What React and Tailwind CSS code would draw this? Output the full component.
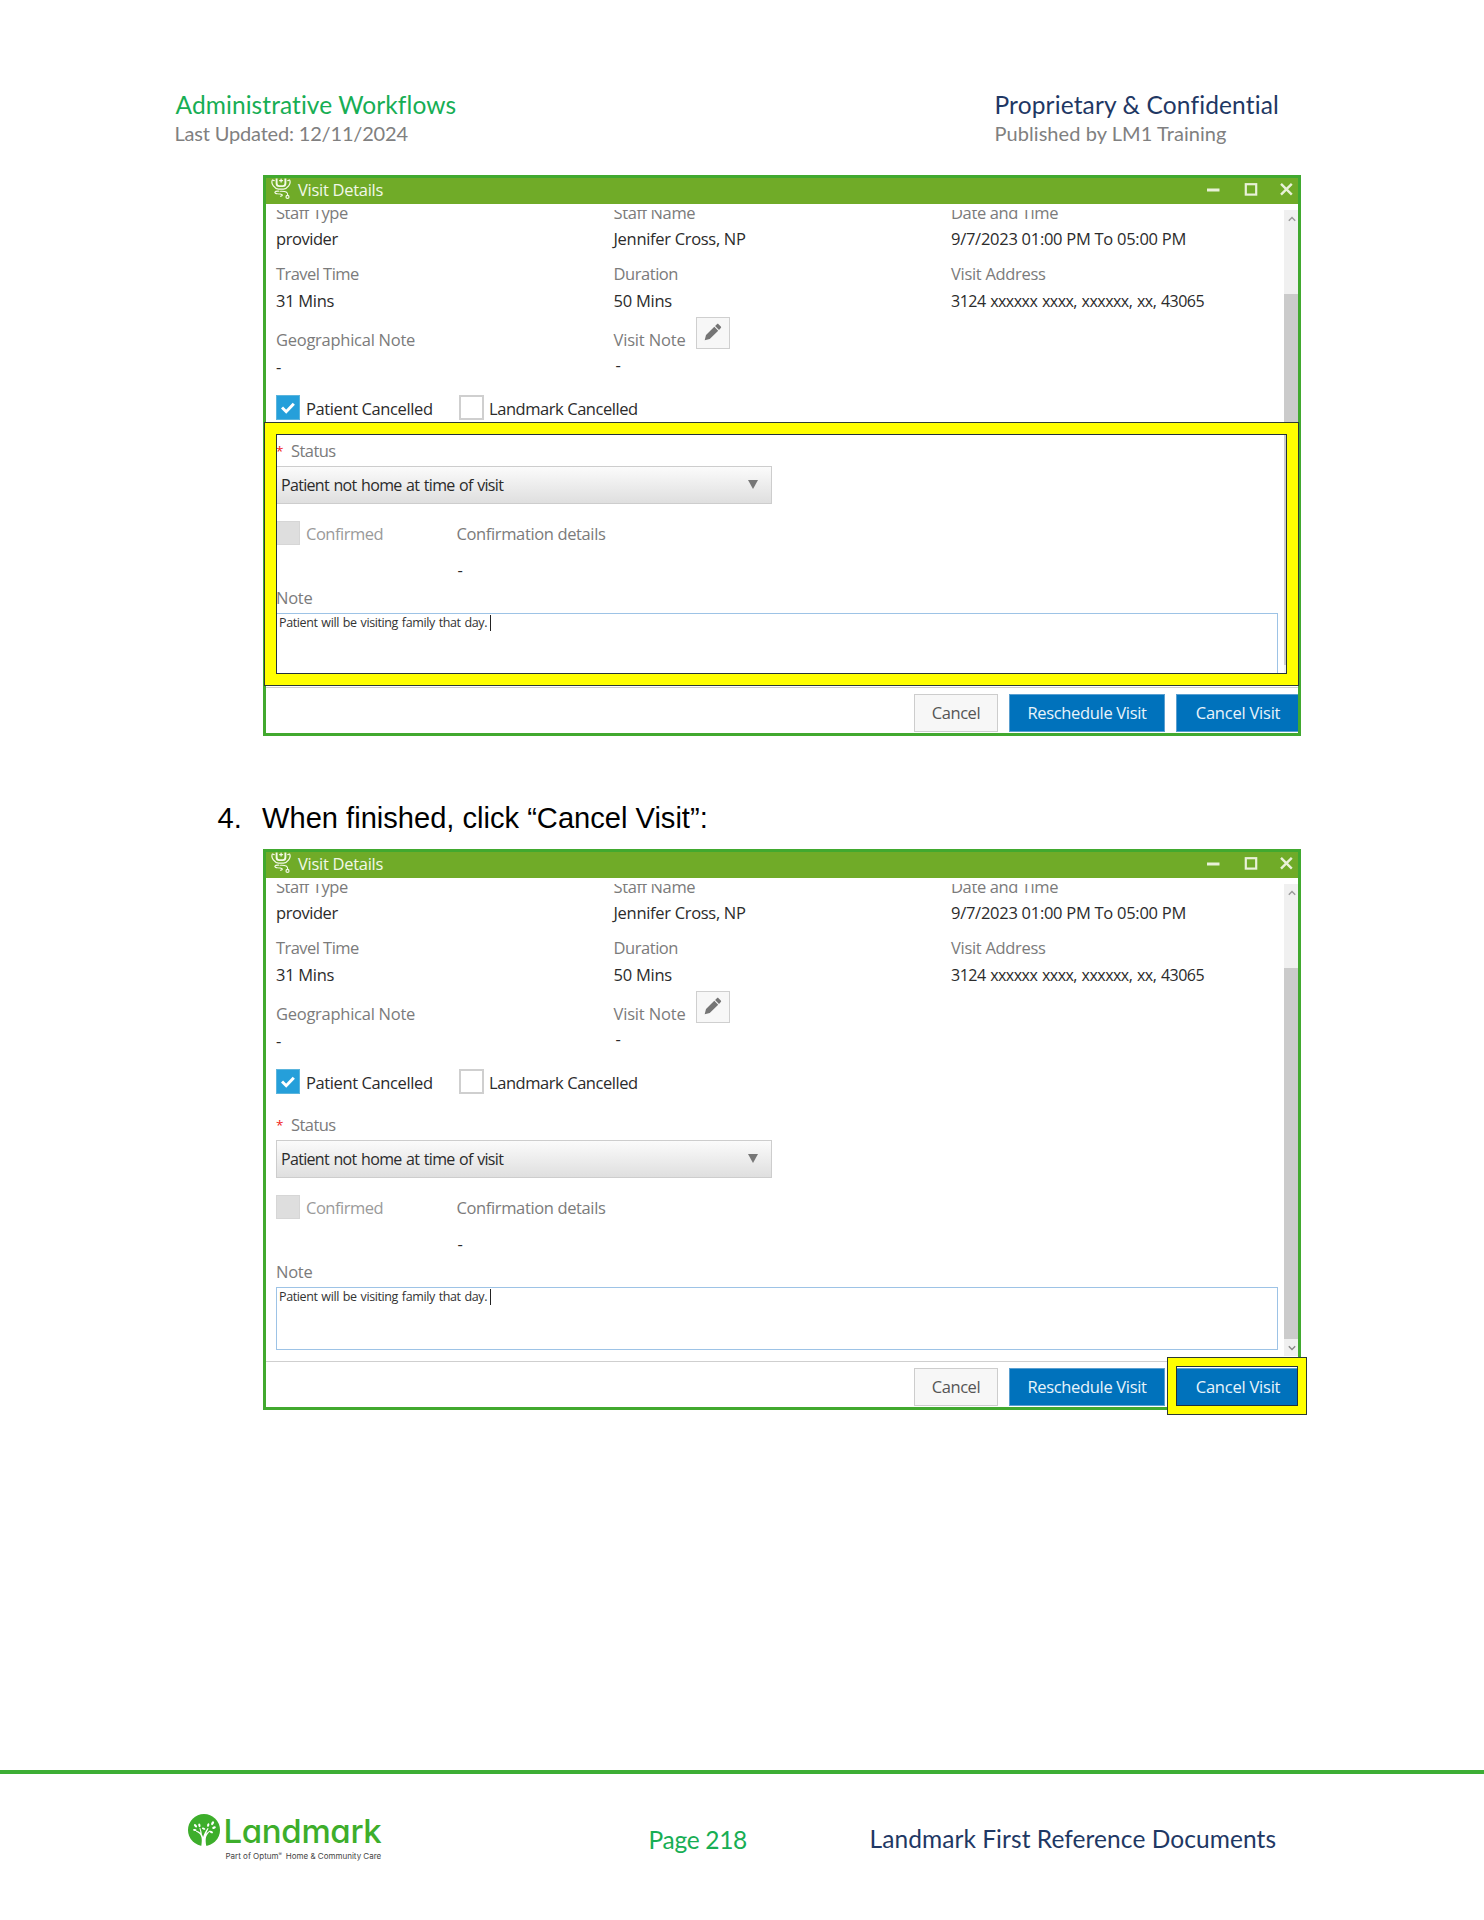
import React from 'react';

function Txt({ children, c = '' }) {
  return <span className={`block h-5 whitespace-nowrap leading-5 ${c}`}>{children}</span>;
}

function StethoscopeIcon() {
  return (
    <svg className="h-[21px] w-5" viewBox="0 0 20 21" fill="none" stroke="#f4fae9" strokeWidth="1.2" strokeLinecap="round">
      <path d="M1.200 2.400C-.2 6 3.500 10.600 7.500 11.200h5C16.500 10.600 20.200 6 18.800 2.400" />
      <path d="M1.400 2l1.800.6M18.600 2l-1.800.6" />
      <path d="M5.600.6v4.600c0 1.700.9 2.900 2.600 2.900h3.600c1.700 0 2.600-1.200 2.600-2.900V.6" strokeWidth="1.900" strokeLinecap="butt" />
      <path d="M8.600 2.600h3M10.100 1.100v3" strokeWidth="1.200" />
      <path d="M8 13.200c-5-.3-5.500 2.300-1.500 2.600 4.500.2 6.500 1.600 3 2.500M9.500 13.300c5.500-.2 7.300 1 7.200 4" strokeWidth="1.100" />
      <circle cx="16.500" cy="18.900" r="1.500" />
    </svg>
  );
}

function TitleBar() {
  return (
    <div className="flex h-[26px] bg-[#70ab28] pl-[5px] pr-[5px] text-[#f2f8e8]">
      <StethoscopeIcon />
      <Txt c="ml-[7px] mt-0.5 flex-1 tracking-[-0.28px]">Visit Details</Txt>
      <svg className="mt-[4px] h-[14px] w-[87px]" viewBox="0 0 87 14" fill="none" stroke="#e9f1d8">
        <path d="M1 8h12.500" strokeWidth="3" />
        <rect x="39.800" y="2.200" width="10.400" height="10.400" strokeWidth="2.200" />
        <path d="M75 1.900l10.800 10.800M85.800 1.900L75 12.700" strokeWidth="2.400" />
      </svg>
    </div>
  );
}

function PencilButton() {
  return (
    <div className="flex h-8 w-[34px] items-center justify-center border border-[#cfcfcf] bg-[#f7f7f7]">
      <svg className="-mt-0.5 h-[18px] w-[18px]" viewBox="0 0 18 18" fill="#757575">
        <path d="M.7 17.200l1.300-5.100L10.300 3.800l3.900 3.900-8.500 8.300zM11.100 3l1.800-1.800c.5-.5 1.100-.5 1.600 0l2.300 2.300c.5.5.5 1.100 0 1.600L15 6.900z" />
      </svg>
    </div>
  );
}

function Field({ label, value, gap, lc, vc }) {
  return (
    <div className="flex flex-col">
      <Txt c={`text-[#7b7b7b] ${lc}`}>{label}</Txt>
      <Txt c={`text-[#2b2b2b] ${gap} ${vc}`}>{value}</Txt>
    </div>
  );
}

function Details() {
  return (
    <div className="-mt-[7px] grid grid-cols-[337.5px_337.5px_1fr] grid-rows-[61px_53px_78px]">
      <Field label="Staff Type" value="provider" gap="mt-1.5" lc="tracking-[-0.45px]" vc="tracking-[-0.45px]" />
      <Field label="Staff Name" value="Jennifer Cross, NP" gap="mt-1.5" lc="tracking-[-0.4px]" vc="tracking-[-0.31px]" />
      <Field label="Date and Time" value="9/7/2023 01:00 PM To 05:00 PM" gap="mt-1.5" lc="tracking-[-0.38px]" vc="tracking-[-0.27px]" />
      <Field label="Travel Time" value="31 Mins" gap="mt-[7px]" lc="tracking-[-0.55px]" vc="tracking-[-0.3px]" />
      <Field label="Duration" value="50 Mins" gap="mt-[7px]" lc="tracking-[-0.45px]" vc="tracking-[-0.25px]" />
      <Field label="Visit Address" value="3124 xxxxxx xxxx, xxxxxx, xx, 43065" gap="mt-[7px]" lc="tracking-[-0.3px]" vc="text-[16px] tracking-[-0.52px] [word-spacing:1px]" />
      <div className="pt-[13px]">
        <Txt c="text-[#7b7b7b] tracking-[-0.26px]">Geographical Note</Txt>
        <Txt c="mt-[7px] text-[#2b2b2b]">-</Txt>
      </div>
      <div>
        <div className="flex h-[38px]">
          <Txt c="mt-[13px] w-[82.5px] text-[#7b7b7b] tracking-[-0.17px]">Visit Note</Txt>
          <PencilButton />
        </div>
        <Txt c="ml-0.5 text-[#2b2b2b]">-</Txt>
      </div>
    </div>
  );
}

function CheckRow() {
  return (
    <div className="flex h-[25px] text-[#2b2b2b]">
      <div className="flex w-6 items-center justify-center border border-[#5bb5dd] bg-[#259fda]">
        <svg className="h-3 w-[14px]" viewBox="0 0 14 12" fill="none" stroke="#fff" strokeWidth="3">
          <path d="M1 5.500l4.200 4.200L12.800 1.700" />
        </svg>
      </div>
      <Txt c="ml-[6px] mt-1 w-[153px] tracking-[-0.39px]">Patient Cancelled</Txt>
      <div className="w-[25px] border-2 border-[#cfcfcf] bg-white" />
      <Txt c="ml-[5px] mt-1 tracking-[-0.44px]">Landmark Cancelled</Txt>
    </div>
  );
}

function StatusForm() {
  return (
    <>
      <div className="mt-[21px] flex h-[25px]">
        <Txt c="w-[15px] text-[#f02020] text-[13.5px]">*</Txt>
        <Txt c="text-[#7b7b7b] tracking-[-0.55px]">Status</Txt>
      </div>
      <div className="flex h-[38px] w-[496px] items-start justify-between border border-[#cdcdcd] bg-linear-to-b from-[#fbfbfb] to-[#dfdfdf] pl-1 pr-[13px] pt-2">
        <Txt c="text-[16px] text-[#2b2b2b] tracking-[-0.68px] [word-spacing:1px]">Patient not home at time of visit</Txt>
        <svg className="mt-[5px] h-[9px] w-[10px]" viewBox="0 0 10 9" fill="#777">
          <path d="M0 0h10L5 9z" />
        </svg>
      </div>
      <div className="mt-[17px] flex h-[67px]">
        <div className="h-6 w-6 border border-[#d6d6d6] bg-[#dedede]" />
        <Txt c="ml-[6px] mt-[3px] w-[150.500px] text-[#9a9a9a] tracking-[-0.5px]">Confirmed</Txt>
        <div>
          <Txt c="mt-[3px] text-[#7b7b7b] tracking-[-0.37px]">Confirmation details</Txt>
          <Txt c="mt-4 ml-px text-[#2b2b2b]">-</Txt>
        </div>
      </div>
      <Txt c="text-[#7b7b7b] tracking-[-0.25px]">Note</Txt>
      <div className="mt-[5px] flex h-[63px] w-[1002px] border border-[#9dc3e6] pl-0.5 text-[12.5px] text-[#333]">
        <Txt c="-mt-px tracking-[-0.39px] [word-spacing:1px]">Patient will be visiting family that day.</Txt>
        <div className="ml-[3px] mt-px h-4 w-px bg-[#222]" />
      </div>
    </>
  );
}

function ScrollBar() {
  return (
    <div className="flex h-[472px] w-[14px] flex-col items-center bg-[#f0f0f0]">
      <svg className="ml-0.5 mt-1.5 h-[6px] w-2" viewBox="0 0 8 6" fill="none" stroke="#999" strokeWidth="1.400">
        <path d="M.8 4.800L4 1.500l3.200 3.300" />
      </svg>
      <div className="mt-[72px] h-[371px] w-full bg-[#cbcbcb]" />
      <svg className="ml-0.5 mt-1.5 h-[6px] w-2" viewBox="0 0 8 6" fill="none" stroke="#888" strokeWidth="1.400">
        <path d="M.8 1.200L4 4.500l3.200-3.300" />
      </svg>
    </div>
  );
}

function Highlight({ box, band }) {
  return (
    <div className={`absolute border border-[#2c3a34] ${box}`}>
      <div className={`h-full w-full border-[#ffff00] ${band}`}>
        <div className="h-full w-full border border-[#22323c]" />
      </div>
    </div>
  );
}

function VisitWindow({ children }) {
  return (
    <div className="relative ml-[263px] h-[561px] w-[1038px] border-[3px] border-[#41a92f] bg-white text-[16.5px]">
      <TitleBar />
      <div className="mt-1.5 flex h-[477px] overflow-hidden">
        <div className="w-[1018px] pl-[10px]">
          <Details />
          <CheckRow />
          <StatusForm />
        </div>
        <ScrollBar />
      </div>
      <div className="flex h-[46px] border-t border-[#cfcfcf] pt-1.5">
        <div className="ml-[648px] flex h-[38px] w-[84px] justify-center border border-[#cdcdcd] bg-[#f7f7f7] pt-2 text-[#555]">
          <Txt c="tracking-[-0.45px]">Cancel</Txt>
        </div>
        <div className="ml-[11px] flex h-[38px] w-[156px] justify-center border border-[#5a9fd0] bg-[#0072bc] pt-2 text-[#e8f4fb]">
          <Txt c="tracking-[-0.33px]">Reschedule Visit</Txt>
        </div>
        <div className="ml-[11px] flex h-[38px] w-[122px] justify-center border border-r-0 border-[#5a9fd0] bg-[#0072bc] pl-px pt-2 text-[#e8f4fb]">
          <Txt c="tracking-[-0.22px]">Cancel Visit</Txt>
        </div>
      </div>
      {children}
    </div>
  );
}

function TreeMark() {
  return (
    <svg className="h-8 w-8" viewBox="0 0 32 32">
      <circle cx="16" cy="16" r="16" fill="#3dae2b" />
      <path d="M13.300 32c.9-6 .6-8.800-1-11.300-1-1.500-2.400-2.400-4.300-3l.4-1c1.600.4 2.900 1 4 2-.1-1.600-.4-3-1-4.500l.9-.3c1 2.300 1.500 4.500 1.600 6.700.5.800.9 1.500 1.200 2.300.9-3 2.300-6 4.600-9l.9.600c-1.100 1.800-1.900 3.500-2.400 5.200 1-1.200 2.200-2.200 3.700-3.200l.5.800c-4.500 3.500-5.500 7-4.100 14.700z" fill="#fff" />
      <g fill="#fff">
        <ellipse cx="6.800" cy="16" rx="1.800" ry="1" transform="rotate(10 6.800 16)" />
        <ellipse cx="7.500" cy="11.700" rx="2" ry="1.100" transform="rotate(50 7.500 11.700)" />
        <ellipse cx="11.400" cy="11.300" rx="1.900" ry="1.100" transform="rotate(80 11.400 11.300)" />
        <ellipse cx="15.600" cy="14.600" rx="1.800" ry="1" transform="rotate(20 15.600 14.600)" />
        <ellipse cx="20.200" cy="11" rx="1.900" ry="1.100" transform="rotate(-75 20.200 11)" />
        <ellipse cx="24.600" cy="9.200" rx="2.100" ry="1.200" transform="rotate(-60 24.600 9.200)" />
        <ellipse cx="26" cy="13.600" rx="1.900" ry="1.100" transform="rotate(-20 26 13.600)" />
        <ellipse cx="23.200" cy="18" rx="1.900" ry="1" transform="rotate(20 23.200 18)" />
      </g>
    </svg>
  );
}

export default function App() {
  return (
    <div className="h-[1920px] w-[1484px] overflow-hidden bg-white font-['Open_Sans',sans-serif]">
      <header className="grid grid-cols-[820px_1fr] whitespace-nowrap pl-[174.5px] pt-[90px] font-['Lato',sans-serif] text-[24.5px] leading-[30px]">
        <div className="pl-px tracking-[0.08px] text-[#17ae54]">Administrative Workflows</div>
        <div className="tracking-[0.14px] text-[#1f3864]">Proprietary &amp; Confidential</div>
        <div className="mt-px text-[20px] leading-6 tracking-[-0.18px] text-[#808080]">Last Updated: 12/11/2024</div>
        <div className="mt-px text-[20px] leading-6 tracking-[0.07px] text-[#808080]">Published by LM1 Training</div>
      </header>

      <main className="mt-[30px]">
        <VisitWindow>
          <Highlight box="-left-[2px] top-[244px] h-[264px] w-[1035px]" band="border-[11px]" />
        </VisitWindow>
        <div className="mt-16 flex h-9 whitespace-nowrap pl-[217.5px] font-['Liberation_Sans',sans-serif] text-[29.1px] leading-9 text-black">
          <span className="w-[44.5px]">4.</span>
          <span>When finished, click “Cancel Visit”:</span>
        </div>
        <div className="mt-[13px]">
          <VisitWindow>
            <Highlight box="left-[901px] top-[505px] h-[58px] w-[140px]" band="border-8" />
          </VisitWindow>
        </div>
      </main>

      <footer className="mt-[360px] flex border-t-4 border-[#3dae35] pl-[187.5px] font-['Lato',sans-serif] text-[24.5px] leading-[30px]">
        <div className="mt-10 flex w-[461px] font-['Inter',sans-serif]">
          <TreeMark />
          <div className="ml-[4px] whitespace-nowrap">
            <div className="h-8 text-[33px] font-medium leading-[34px] tracking-[-0.35px] text-[#3dae2b] [font-feature-settings:'cv11']">Landmark</div>
            <div className="mt-[5px] pl-[2px] text-[8px] leading-[10px] text-[#444]">
              Part of Optum<span className="inline-block w-[5px] align-top text-[5px] leading-[7px]">®</span> Home &amp; Community Care
            </div>
          </div>
        </div>
        <div className="mt-[51px] w-[221px] tracking-[-0.3px] text-[#17ae54]">Page 218</div>
        <div className="mt-[50px] whitespace-nowrap tracking-[0.07px] text-[#1f3864]">Landmark First Reference Documents</div>
      </footer>
    </div>
  );
}
